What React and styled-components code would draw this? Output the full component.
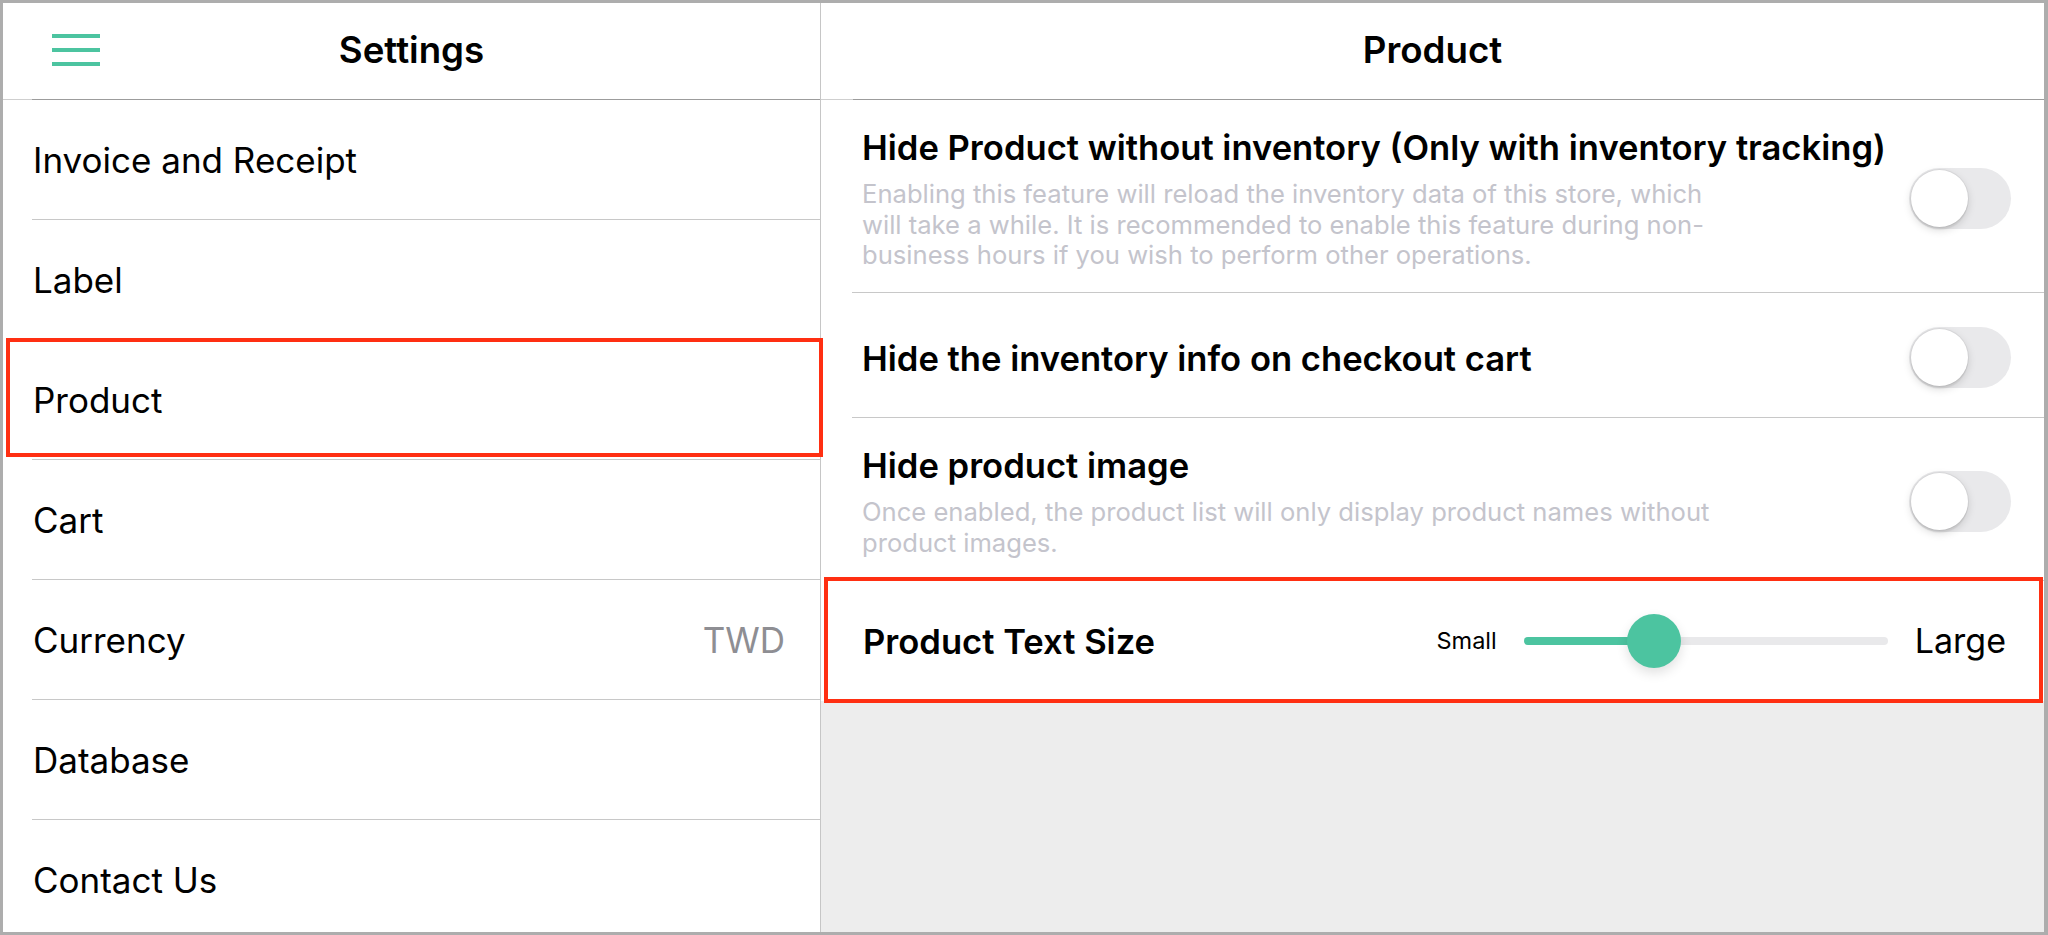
import React from "react";
import styled, { createGlobalStyle } from "styled-components";

const GlobalStyle = createGlobalStyle`
  html, body { margin: 0; padding: 0; background: #ffffff; }
  body { font-family: Inter, "Noto Sans", "Liberation Sans", sans-serif; }
  * { box-sizing: border-box; }
`;

const GREEN = "#4cc4a0";
const RED = "#ff2f12";

const Frame = styled.div`
  width: 2048px;
  height: 935px;
  border: 3px solid #adadad;
  border-right-width: 4px;
  display: flex;
  overflow: hidden;
  background: #ffffff;
  font-family: Inter, "Noto Sans", "Liberation Sans", sans-serif;
  color: #000000;
`;

const Sidebar = styled.aside`
  width: 818px;
  flex: none;
  border-right: 1px solid #c6c6c6;
  background: #ffffff;
  display: flex;
  flex-direction: column;
`;

const Detail = styled.main`
  flex: 1;
  min-width: 0;
  display: flex;
  flex-direction: column;
  background: #ededed;
`;

const Header = styled.header`
  height: 96px;
  flex: none;
  display: grid;
  grid-template-columns: 1fr auto 1fr;
  align-items: center;
  padding-bottom: 2px;
  background: #ffffff;
`;

const HeaderRule = styled.div`
  height: 1px;
  flex: none;
  background: linear-gradient(
    to right,
    #cfcfcf ${(p) => p.$inset}px,
    #9c9c9c ${(p) => p.$inset}px
  );
`;

const Title = styled.h1`
  grid-column: 2;
  margin: 0;
  font-size: 36.7px;
  line-height: 44px;
  font-weight: 600;
  color: #000000;
  white-space: nowrap;
`;

const MenuButton = styled.button`
  grid-column: 1;
  justify-self: start;
  margin-left: 49px;
  padding: 0;
  border: 0;
  background: none;
  display: flex;
  flex-direction: column;
  gap: 10px;
  cursor: pointer;
`;

const MenuLine = styled.span`
  display: block;
  width: 48px;
  height: 4px;
  background: ${GREEN};
`;

const NavItem = styled.div`
  position: relative;
  height: 120px;
  flex: none;
  margin-left: 29px;
  padding: 0 35px 0 1px;
  display: flex;
  align-items: center;
  justify-content: space-between;
  border-bottom: ${(p) => (p.$last ? "none" : "1px solid #c8c8c8")};
  font-size: 35px;
  line-height: 42px;
  font-weight: 400;
  color: #000000;
  white-space: nowrap;
`;

const NavValue = styled.span`
  font-size: 35px;
  color: #8e8e93;
`;

const SidebarHighlight = styled.span`
  position: absolute;
  top: -2px;
  bottom: 2px;
  left: -26px;
  right: -3px;
  border: 4px solid ${RED};
  z-index: 3;
  pointer-events: none;
`;

const SettingsList = styled.section`
  background: #ffffff;
  flex: none;
`;

const SettingRow = styled.div`
  margin-left: 31px;
  min-height: 125px;
  padding: 26px 33px 21px 10px;
  display: flex;
  align-items: center;
  gap: 24px;
  border-bottom: 1px solid #c8c8c8;
`;

const SettingText = styled.div`
  flex: 1;
  min-width: 0;
`;

const SettingTitle = styled.div`
  font-size: 34.6px;
  line-height: 42px;
  font-weight: 600;
  color: #000000;
  white-space: nowrap;
`;

const SettingDesc = styled.p`
  margin: 11px 0 0;
  max-width: 865px;
  font-size: 25.6px;
  line-height: 30.7px;
  font-weight: 400;
  color: #c4c4cc;
`;

const Switch = styled.span`
  flex: none;
  width: 102px;
  height: 61px;
  padding: 2px;
  border-radius: 31px;
  background: #e9e9eb;
  display: flex;
  align-items: center;
  justify-content: ${(p) => (p.$on ? "flex-end" : "flex-start")};
`;

const SwitchKnob = styled.span`
  width: 57px;
  height: 57px;
  border-radius: 50%;
  background: #ffffff;
  box-shadow: 0 0 0 1px rgba(0, 0, 0, 0.05), 0 3px 8px rgba(0, 0, 0, 0.15),
    0 3px 1px rgba(0, 0, 0, 0.05);
`;

const SliderRow = styled.div`
  position: relative;
  height: 120px;
  flex: none;
  padding: 0 38px 0 42px;
  display: flex;
  align-items: center;
  background: #ffffff;
`;

const RowHighlight = styled.span`
  position: absolute;
  top: -4px;
  bottom: -2px;
  left: 3px;
  right: 1px;
  border: 4px solid ${RED};
  pointer-events: none;
`;

const SliderGroup = styled.div`
  margin-left: auto;
  display: flex;
  align-items: center;
  gap: 27px;
`;

const SmallLabel = styled.span`
  font-size: 23.5px;
  font-weight: 400;
  color: #000000;
`;

const LargeLabel = styled.span`
  font-size: 34px;
  font-weight: 400;
  color: #000000;
`;

const Track = styled.div`
  position: relative;
  width: 364px;
  height: 8px;
  border-radius: 4px;
  background: #e9e9eb;
`;

const TrackFill = styled.div`
  position: absolute;
  left: 0;
  top: 0;
  bottom: 0;
  border-radius: 4px;
  background: ${GREEN};
`;

const Thumb = styled.div`
  position: absolute;
  top: 50%;
  width: 54px;
  height: 54px;
  border-radius: 50%;
  background: ${GREEN};
  transform: translate(-50%, -50%);
  box-shadow: 0 5px 12px rgba(0, 0, 0, 0.12);
`;

const navItems = [
  { label: "Invoice and Receipt" },
  { label: "Label" },
  { label: "Product", selected: true },
  { label: "Cart" },
  { label: "Currency", value: "TWD" },
  { label: "Database" },
  { label: "Contact Us" },
];

const settings = [
  {
    title: "Hide Product without inventory (Only with inventory tracking)",
    desc: "Enabling this feature will reload the inventory data of this store, which will take a while. It is recommended to enable this feature during non-business hours if you wish to perform other operations.",
  },
  { title: "Hide the inventory info on checkout cart" },
  {
    title: "Hide product image",
    desc: "Once enabled, the product list will only display product names without product images.",
  },
];

function TextSizeSlider({ value }) {
  const trackWidth = 364;
  const px = Math.round(trackWidth * value);
  return (
    <SliderGroup>
      <SmallLabel>Small</SmallLabel>
      <Track>
        <TrackFill style={{ width: px }} />
        <Thumb style={{ left: px }} />
      </Track>
      <LargeLabel>Large</LargeLabel>
    </SliderGroup>
  );
}

export default function App() {
  return (
    <>
      <GlobalStyle />
      <Frame>
        <Sidebar>
          <Header>
            <MenuButton aria-label="Menu">
              <MenuLine />
              <MenuLine />
              <MenuLine />
            </MenuButton>
            <Title>Settings</Title>
          </Header>
          <HeaderRule $inset={29} />
          {navItems.map((item, i) => (
            <NavItem key={item.label} $last={i === navItems.length - 1}>
              <span>{item.label}</span>
              {item.value && <NavValue>{item.value}</NavValue>}
              {item.selected && <SidebarHighlight />}
            </NavItem>
          ))}
        </Sidebar>
        <Detail>
          <Header>
            <Title>Product</Title>
          </Header>
          <HeaderRule $inset={32} />
          <SettingsList>
            {settings.map((s) => (
              <SettingRow key={s.title}>
                <SettingText>
                  <SettingTitle>{s.title}</SettingTitle>
                  {s.desc && <SettingDesc>{s.desc}</SettingDesc>}
                </SettingText>
                <Switch>
                  <SwitchKnob />
                </Switch>
              </SettingRow>
            ))}
          </SettingsList>
          <SliderRow>
            <SettingTitle>Product Text Size</SettingTitle>
            <TextSizeSlider value={0.357} />
            <RowHighlight />
          </SliderRow>
        </Detail>
      </Frame>
    </>
  );
}
